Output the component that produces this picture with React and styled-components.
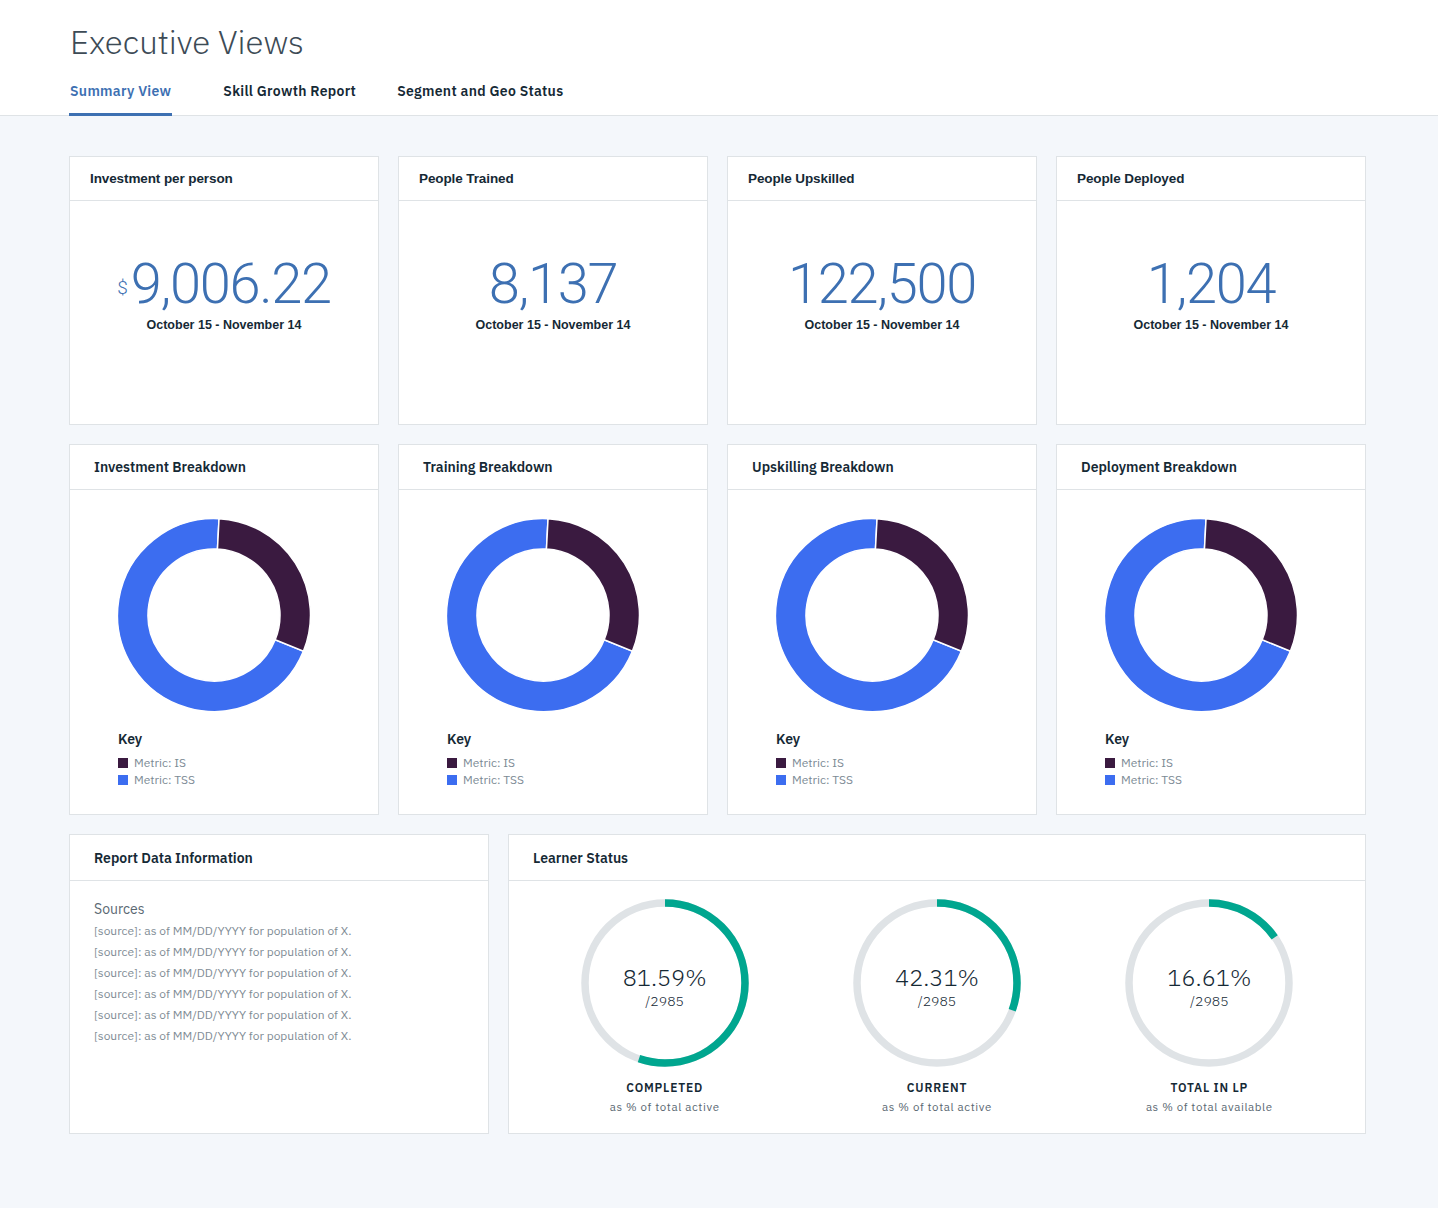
import styled, { createGlobalStyle } from "styled-components";

const GlobalStyle = createGlobalStyle`
  body {
    margin: 0;
    background: #f4f7fb;
    font-family: "IBM Plex Sans", "Noto Sans", "Open Sans", sans-serif;
    color: #152935;
  }
`;

const summary = [
  { title: "Investment per person", value: "9,006.22", currency: true },
  { title: "People Trained", value: "8,137" },
  { title: "People Upskilled", value: "122,500" },
  { title: "People Deployed", value: "1,204" },
];

const breakdowns = [
  "Investment Breakdown",
  "Training Breakdown",
  "Upskilling Breakdown",
  "Deployment Breakdown",
];

// arc = how much of the ring is filled in the chart
const gauges = [
  { pct: 81.59, arc: 0.552, label: "COMPLETED", sub: "as % of total active" },
  { pct: 42.31, arc: 0.305, label: "CURRENT", sub: "as % of total active" },
  { pct: 16.61, arc: 0.153, label: "TOTAL IN LP", sub: "as % of total available" },
];

const polar = (cx, cy, r, deg) => {
  const a = ((deg - 90) * Math.PI) / 180;
  return [cx + r * Math.cos(a), cy + r * Math.sin(a)];
};

const slice = (cx, cy, ro, ri, a0, a1) => {
  const large = a1 - a0 > 180 ? 1 : 0;
  const [x0, y0] = polar(cx, cy, ro, a0);
  const [x1, y1] = polar(cx, cy, ro, a1);
  const [x2, y2] = polar(cx, cy, ri, a1);
  const [x3, y3] = polar(cx, cy, ri, a0);
  return `M${x0} ${y0} A${ro} ${ro} 0 ${large} 1 ${x1} ${y1} L${x2} ${y2} A${ri} ${ri} 0 ${large} 0 ${x3} ${y3} Z`;
};

const Donut = () => (
  <svg width="194" height="194" viewBox="0 0 194 194">
    <path d={slice(97, 97, 96.5, 66, 112, 363)} fill="#3c6df0" stroke="#fff" strokeWidth="1.5" />
    <path d={slice(97, 97, 96.5, 66, 3, 112)} fill="#3a1a40" stroke="#fff" strokeWidth="1.5" />
  </svg>
);

const Gauge = ({ arc }) => {
  const r = 80;
  const c = 2 * Math.PI * r;
  return (
    <svg width="168" height="168" viewBox="0 0 168 168">
      <circle cx="84" cy="84" r={r} fill="none" stroke="#dfe3e6" strokeWidth="7.5" />
      <circle
        cx="84"
        cy="84"
        r={r}
        fill="none"
        stroke="#00a68f"
        strokeWidth="7.5"
        strokeDasharray={`${c * arc} ${c}`}
        transform="rotate(-90 84 84)"
      />
    </svg>
  );
};

const App = () => {
  return (
    <>
      <GlobalStyle />
      <Header>
        <Title>Executive Views</Title>
        <Tabs>
          <Tab $active>Summary View</Tab>
          <Tab>Skill Growth Report</Tab>
          <Tab>Segment and Geo Status</Tab>
        </Tabs>
      </Header>

      <Main>
        <Grid4>
          {summary.map((s) => (
            <Card key={s.title} $height={269}>
              <SummaryHead>{s.title}</SummaryHead>
              <SummaryBody>
                <BigNumber>
                  {s.currency && <Currency>$</Currency>}
                  {s.value}
                </BigNumber>
                <DateRange>October 15 - November 14</DateRange>
              </SummaryBody>
            </Card>
          ))}
        </Grid4>

        <Grid4>
          {breakdowns.map((b) => (
            <Card key={b} $height={371}>
              <CardHead>{b}</CardHead>
              <DonutBody>
                <Donut />
                <KeyTitle>Key</KeyTitle>
                <Legend>
                  <LegendItem>
                    <Swatch $color="#3a1a40" />
                    Metric: IS
                  </LegendItem>
                  <LegendItem>
                    <Swatch $color="#3c6df0" />
                    Metric: TSS
                  </LegendItem>
                </Legend>
              </DonutBody>
            </Card>
          ))}
        </Grid4>

        <BottomRow>
          <Card $height={300}>
            <CardHead $tall>Report Data Information</CardHead>
            <SourcesBody>
              <SourcesTitle>Sources</SourcesTitle>
              {Array.from({ length: 6 }).map((_, i) => (
                <SourceLine key={i}>[source]: as of MM/DD/YYYY for population of X.</SourceLine>
              ))}
            </SourcesBody>
          </Card>
          <Card $height={300}>
            <CardHead $tall>Learner Status</CardHead>
            <GaugeRow>
              {gauges.map((g) => (
                <GaugeItem key={g.label}>
                  <GaugeWrap>
                    <Gauge arc={g.arc} />
                    <GaugeCenter>
                      <Pct>{g.pct}%</Pct>
                      <Of>/2985</Of>
                    </GaugeCenter>
                  </GaugeWrap>
                  <GaugeLabel>{g.label}</GaugeLabel>
                  <GaugeSub>{g.sub}</GaugeSub>
                </GaugeItem>
              ))}
            </GaugeRow>
          </Card>
        </BottomRow>
      </Main>
    </>
  );
};

const Header = styled.header`
  background: #fff;
  border-bottom: 1px solid #dfe3e6;
  padding: 22px 0 0 69px;
`;

const Title = styled.h1`
  margin: 0;
  font-family: "IBM Plex Sans", "Open Sans", "Noto Sans", sans-serif;
  font-weight: 300;
  font-size: 33px;
  line-height: 40px;
  color: #3d4b56;
  padding-left: 1px;
`;

const Tabs = styled.nav`
  display: flex;
  gap: 39px;
  margin-top: 20px;
`;

const Tab = styled.div`
  font-size: 14px;
  font-weight: 600;
  line-height: 18px;
  letter-spacing: 0.3px;
  padding: 0 1px 13px;
  color: ${(p) => (p.$active ? "#3d70b2" : "#152935")};
  border-bottom: 3px solid ${(p) => (p.$active ? "#3d70b2" : "transparent")};
  margin-bottom: -1px;

  &:first-child {
    margin-right: 11px;
  }
`;

const Main = styled.main`
  padding: 40px 72px 60px 69px;
  display: flex;
  flex-direction: column;
  gap: 19px;
`;

const Grid4 = styled.div`
  display: grid;
  grid-template-columns: repeat(4, 1fr);
  gap: 19px;
`;

const BottomRow = styled.div`
  display: grid;
  grid-template-columns: 420px 1fr;
  gap: 19px;
`;

const Card = styled.section`
  background: #fff;
  border: 1px solid #dfe3e6;
  height: ${(p) => p.$height}px;
  box-sizing: border-box;
  display: flex;
  flex-direction: column;
`;

const SummaryHead = styled.div`
  height: 43px;
  border-bottom: 1px solid #dfe3e6;
  display: flex;
  align-items: center;
  padding-left: 20px;
  font-family: "Liberation Sans", Arial, sans-serif;
  font-weight: 700;
  font-size: 13.5px;
  letter-spacing: -0.1px;
  color: #152935;
`;

const SummaryBody = styled.div`
  display: flex;
  flex-direction: column;
  align-items: center;
  padding-top: 53px;
`;

const BigNumber = styled.div`
  font-family: "Roboto", "Liberation Sans", sans-serif;
  font-weight: 300;
  font-size: 56px;
  line-height: 60px;
  color: #3d70b2;
  letter-spacing: -1.3px;
`;

const Currency = styled.span`
  font-size: 19px;
  vertical-align: top;
  position: relative;
  top: 4px;
  margin-right: 3px;
  letter-spacing: 0;
`;

const DateRange = styled.div`
  font-family: "Liberation Sans", Arial, sans-serif;
  font-weight: 700;
  font-size: 12.5px;
  margin-top: 4px;
  color: #152935;
`;

const CardHead = styled.div`
  height: ${(p) => (p.$tall ? 45 : 44)}px;
  border-bottom: 1px solid #dfe3e6;
  display: flex;
  align-items: center;
  padding-left: 24px;
  font-weight: 600;
  font-size: 14px;
  color: #152935;
`;

const DonutBody = styled.div`
  padding: 28px 0 0 47px;
  display: flex;
  flex-direction: column;
`;

const KeyTitle = styled.div`
  font-weight: 600;
  font-size: 14px;
  margin-top: 18px;
  padding-left: 1px;
`;

const Legend = styled.ul`
  list-style: none;
  margin: 6px 0 0;
  padding: 0 0 0 1px;
`;

const LegendItem = styled.li`
  display: flex;
  align-items: center;
  gap: 6px;
  font-size: 12px;
  line-height: 17px;
  color: #7b8a94;
`;

const Swatch = styled.span`
  width: 10px;
  height: 10px;
  background: ${(p) => p.$color};
`;

const SourcesBody = styled.div`
  padding: 18px 24px;
`;

const SourcesTitle = styled.div`
  font-size: 14px;
  color: #5a6872;
  line-height: 20px;
  margin-bottom: 1px;
`;

const SourceLine = styled.div`
  font-size: 12px;
  line-height: 21px;
  color: #7f8c95;
`;

const GaugeRow = styled.div`
  display: grid;
  grid-template-columns: repeat(3, 1fr);
  gap: 39px;
  padding: 18px 39px 0;
`;

const GaugeItem = styled.div`
  display: flex;
  flex-direction: column;
  align-items: center;
`;

const GaugeWrap = styled.div`
  position: relative;
  width: 168px;
  height: 168px;
`;

const GaugeCenter = styled.div`
  position: absolute;
  inset: 0;
  display: flex;
  flex-direction: column;
  align-items: center;
  justify-content: center;
  padding-top: 6px;
  box-sizing: border-box;
`;

const Pct = styled.div`
  font-weight: 300;
  font-size: 23.5px;
  line-height: 30px;
  color: #152935;
`;

const Of = styled.div`
  font-weight: 300;
  font-size: 14px;
  line-height: 18px;
  color: #152935;
`;

const GaugeLabel = styled.div`
  margin-top: 13px;
  font-weight: 600;
  font-size: 12px;
  letter-spacing: 0.8px;
  color: #152935;
`;

const GaugeSub = styled.div`
  margin-top: 4px;
  font-size: 11.5px;
  letter-spacing: 0.6px;
  color: #5a6872;
`;

export default App;
